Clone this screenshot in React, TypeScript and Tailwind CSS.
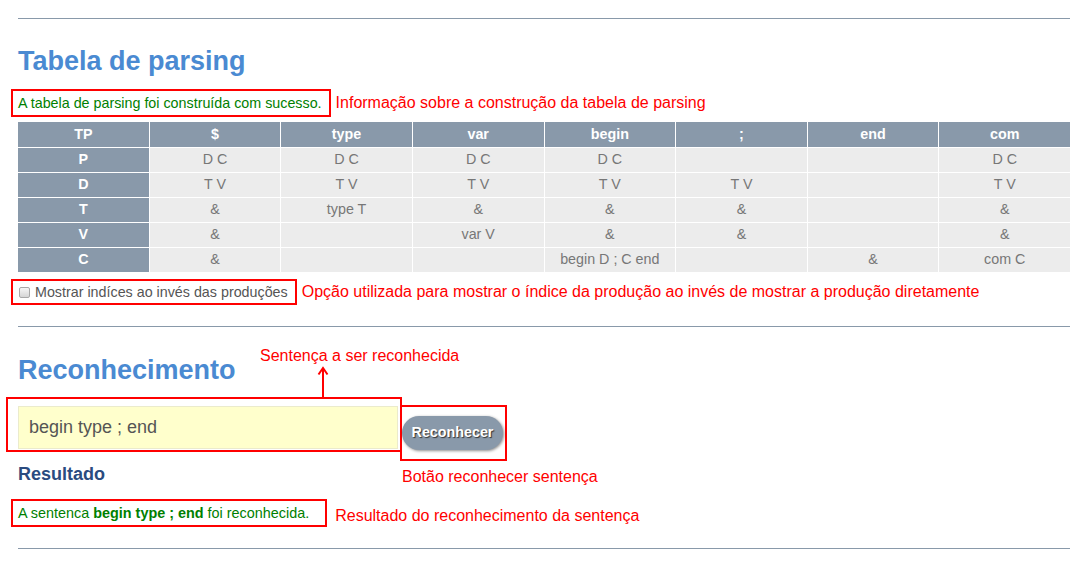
import React from 'react'

const terminals = ['$', 'type', 'var', 'begin', ';', 'end', 'com']

// linhas da tabela de parsing: não-terminal + produção por terminal
const rows: [string, string[]][] = [
  ['P', ['D C', 'D C', 'D C', 'D C', '', '', 'D C']],
  ['D', ['T V', 'T V', 'T V', 'T V', 'T V', '', 'T V']],
  ['T', ['&', 'type T', '&', '&', '&', '', '&']],
  ['V', ['&', '', 'var V', '&', '&', '', '&']],
  ['C', ['&', '', '', 'begin D ; C end', '', '&', 'com C']],
]

function Arrow() {
  return (
    <svg width="12" height="33" viewBox="0 0 12 33" className="ml-[57px] block">
      <line x1="6" y1="2" x2="6" y2="33" stroke="#ff0000" strokeWidth="2" />
      <polyline points="1.5,8.5 6,2 10.5,8.5" fill="none" stroke="#ff0000" strokeWidth="2" />
    </svg>
  )
}

export default function App() {
  return (
    <div
      className="w-[1084px] h-[562px] overflow-hidden bg-white pl-[18px] pr-[14px] pt-[18px]"
      style={{ fontFamily: '"Liberation Sans", Arial, sans-serif' }}
    >
      <hr className="border-0 border-t border-[#8999aa]" />

      {/* Tabela de parsing */}
      <h2 className="mt-[27px] text-[27px] leading-[30px] font-bold text-[#4a8ad2]">Tabela de parsing</h2>

      <div className="mt-[13px] flex items-center">
        <div className="-ml-[7px] border-2 border-[#ff0000] pl-[5px] pr-[7px] py-[2px] text-[14.3px] leading-[20px] text-[#008000]">
          A tabela de parsing foi construída com sucesso.
        </div>
        <span className="ml-[5px] text-[16px] leading-[20px] text-[#ff0000]">
          Informação sobre a construção da tabela de parsing
        </span>
      </div>

      <div className="mt-[5px] grid grid-cols-8 gap-px bg-white text-[14.3px]">
        <div className="h-[25px] flex items-center justify-center bg-[#8999aa] text-white font-bold">TP</div>
        {terminals.map((t) => (
          <div key={t} className="h-[25px] flex items-center justify-center bg-[#8999aa] text-white font-bold">
            {t}
          </div>
        ))}
        {rows.map(([nt, cells]) => (
          <React.Fragment key={nt}>
            <div className="h-[24px] flex items-center justify-center bg-[#8999aa] text-white font-bold">{nt}</div>
            {cells.map((c, i) => (
              <div key={i} className="h-[24px] flex items-center justify-center bg-[#ececec] text-[#777]">
                {c}
              </div>
            ))}
          </React.Fragment>
        ))}
      </div>

      <div className="mt-[7px] flex items-center">
        <label className="-ml-[7px] flex items-center border-2 border-[#ff0000] pl-[6px] pr-[7px] py-px text-[14.3px] leading-[20px] text-[#555]">
          <input
            type="checkbox"
            className="appearance-none w-[11px] h-[11px] rounded-[2px] border border-[#a8a8a8] bg-gradient-to-b from-[#f6f6f6] to-[#d6d6d6] mr-[5px]"
          />
          Mostrar indíces ao invés das produções
        </label>
        <span className="ml-[5px] text-[16px] leading-[20px] text-[#ff0000]">
          Opção utilizada para mostrar o índice da produção ao invés de mostrar a produção diretamente
        </span>
      </div>

      <hr className="mt-[21px] border-0 border-t border-[#8999aa]" />

      {/* Reconhecimento */}
      <h2 className="mt-[28px] text-[27px] leading-[30px] font-bold text-[#4a8ad2]">Reconhecimento</h2>

      <div className="mt-[12px] flex items-start">
        <div className="relative -ml-[12px] w-[396px] border-2 border-[#ff0000] pl-[10px] pr-[2px] pt-[7px] pb-[1px]">
          <div className="absolute left-[252px] bottom-full flex flex-col">
            <span className="text-[16px] leading-[20px] text-[#ff0000] whitespace-nowrap">Sentença a ser reconhecida</span>
            <Arrow />
          </div>
          <input
            type="text"
            defaultValue="begin type ; end"
            className="block w-full h-[43px] bg-[#ffffcc] border border-[#ebebcc] pl-[10px] text-[18px] text-[#555] outline-none"
          />
        </div>
        <div className="relative -ml-[2px] mt-[8px] border-2 border-[#ff0000] pl-0 pr-[2px] py-[9px]">
          <button
            type="button"
            className="w-[101px] h-[34px] rounded-full bg-[#8999aa] text-white font-bold text-[14.3px] [text-shadow:1px_1px_1px_#333] shadow-[1px_1px_3px_rgba(0,0,0,0.45)]"
          >
            Reconhecer
          </button>
          <span className="absolute left-0 top-full mt-[8px] text-[16px] leading-[20px] text-[#ff0000] whitespace-nowrap">
            Botão reconhecer sentença
          </span>
        </div>
      </div>

      <h3 className="mt-[2px] text-[18px] leading-[22px] font-bold text-[#2a4b7f]">Resultado</h3>

      <div className="mt-[14px] flex items-start">
        <div className="-ml-[7px] border-2 border-[#ff0000] pl-[5px] pr-[16px] py-[2px] text-[14.4px] leading-[20px] text-[#008000]">
          A sentenca <b>begin type ; end</b> foi reconhecida.
        </div>
        <span className="ml-[8px] mt-[7px] text-[16px] leading-[20px] text-[#ff0000]">
          Resultado do reconhecimento da sentença
        </span>
      </div>

      <hr className="mt-[21px] border-0 border-t border-[#8999aa]" />
    </div>
  )
}
